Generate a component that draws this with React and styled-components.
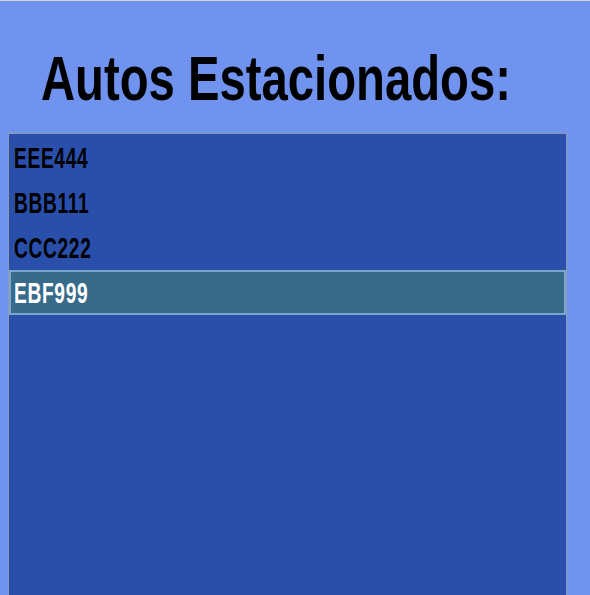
import styled, { createGlobalStyle } from 'styled-components';

const GlobalStyle = createGlobalStyle`
  html, body {
    margin: 0;
    padding: 0;
    background-color: #6f93ef;
    overflow: hidden;
  }
`;

const Window = styled.div`
  height: 595px;
  border-top: 1px solid #d4d4d4;
  box-sizing: border-box;
  display: flex;
  flex-direction: column;
  background-color: #6f93ef;
  overflow: hidden;
`;

const Header = styled.header`
  height: 132px;
  box-sizing: border-box;
  padding: 46px 0 0 41px;
  overflow: hidden;
`;

const Title = styled.h1`
  margin: 0;
  display: inline-block;
  font-family: "Liberation Sans", Arial, sans-serif;
  font-weight: bold;
  font-size: 63px;
  line-height: 63px;
  white-space: nowrap;
  color: #000;
  transform: scaleX(0.75);
  transform-origin: left center;
`;

const List = styled.ul`
  list-style: none;
  margin: 0 0 0 8px;
  padding: 1px 0 0;
  width: 559px;
  flex: 1;
  box-sizing: border-box;
  background-color: #2a4fab;
  border: 1px solid #8d9ab0;
  border-bottom: none;
`;

const Item = styled.li`
  height: 45px;
  box-sizing: border-box;
  display: flex;
  align-items: center;
  padding-left: ${(p) => (p.$selected ? '3px' : '5px')};
  color: ${(p) => (p.$selected ? '#ffffff' : '#000000')};
  background-color: ${(p) => (p.$selected ? '#386a8a' : 'transparent')};
  border: ${(p) => (p.$selected ? '2px solid #7aa5cf' : 'none')};
`;

const Plate = styled.span`
  display: inline-block;
  font-family: "Liberation Sans", Arial, sans-serif;
  font-weight: bold;
  font-size: 30px;
  line-height: 30px;
  letter-spacing: 1px;
  transform: scaleX(0.64);
  transform-origin: left center;
`;

const autos = ['EEE444', 'BBB111', 'CCC222', 'EBF999'];

export default function App() {
  return (
    <>
      <GlobalStyle />
      <Window>
        <Header>
          <Title>Autos Estacionados:</Title>
        </Header>
        <List>
          {autos.map((a) => (
            <Item key={a} $selected={a === 'EBF999'}>
              <Plate>{a}</Plate>
            </Item>
          ))}
        </List>
      </Window>
    </>
  );
}
